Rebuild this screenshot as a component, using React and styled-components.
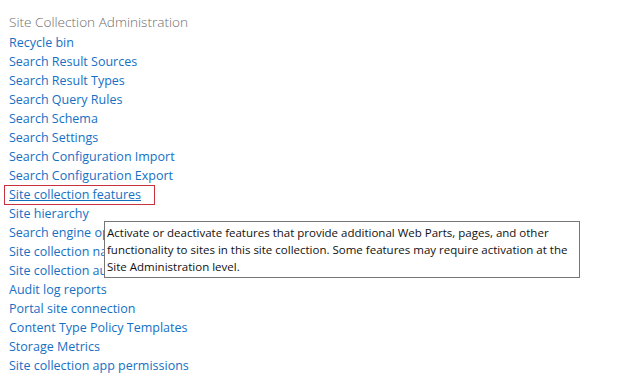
import styled, { createGlobalStyle } from "styled-components"

const GlobalStyle = createGlobalStyle`
    html, body{
        margin: 0;
        padding: 0;
        background: #fff;
    }
    body{
        font-family: "Open Sans", "Noto Sans", sans-serif;
    }
`

const links = [
    "Recycle bin",
    "Search Result Sources",
    "Search Result Types",
    "Search Query Rules",
    "Search Schema",
    "Search Settings",
    "Search Configuration Import",
    "Search Configuration Export",
    "Site collection features",
    "Site hierarchy",
    "Search engine optimization settings",
    "Site collection navigation",
    "Site collection audit settings",
    "Audit log reports",
    "Portal site connection",
    "Content Type Policy Templates",
    "Storage Metrics",
    "Site collection app permissions",
]

export default function App(){
    return (
        <>
        <GlobalStyle/>
            <Page>
                <Title>Site Collection Administration</Title>
                <LinkList>
                    {links.map(name => (
                        <li key={name}>
                            <LinkItem href="#" $active={name === "Site collection features"}>{name}</LinkItem>
                        </li>
                    ))}
                </LinkList>
                <Tooltip>
                    Activate or deactivate features that provide additional Web Parts, pages, and other<br/>
                    functionality to sites in this site collection. Some features may require activation at the<br/>
                    Site Administration level.
                </Tooltip>
            </Page>
        </>
    )
}

const Page = styled.div`
    position: relative;
    width: 628px;
    height: 386px;
    padding: 12px 0 0 9px;
    box-sizing: border-box;
    overflow: hidden;
`

const Title = styled.h2`
    margin: 0;
    font-size: 13.6px;
    font-weight: 300;
    color: #6e6e6e;
    line-height: 20px;
`

const LinkList = styled.ul`
    list-style: none;
    margin: 0;
    padding: 0;

    li{
        height: 19px;
        line-height: 19px;
    }
`

const LinkItem = styled.a`
    display: inline-block;
    font-size: 12.5px;
    color: #1570c4;
    text-decoration: ${p => p.$active ? "underline" : "none"};
    white-space: nowrap;
    position: relative;

    ${p => p.$active && `
        &::after{
            content: "";
            position: absolute;
            left: -5px;
            top: 0;
            width: 151px;
            height: 20px;
            border: 1px solid #c8323f;
            box-sizing: border-box;
        }
    `}
`

const Tooltip = styled.div`
    position: absolute;
    left: 104px;
    top: 221px;
    width: 476px;
    height: 57px;
    box-sizing: border-box;
    padding: 2px 0 0 2px;
    border: 1px solid #767676;
    background: #fff;
    color: #111;
    font-size: 11.5px;
    line-height: 17px;
    white-space: nowrap;
`
